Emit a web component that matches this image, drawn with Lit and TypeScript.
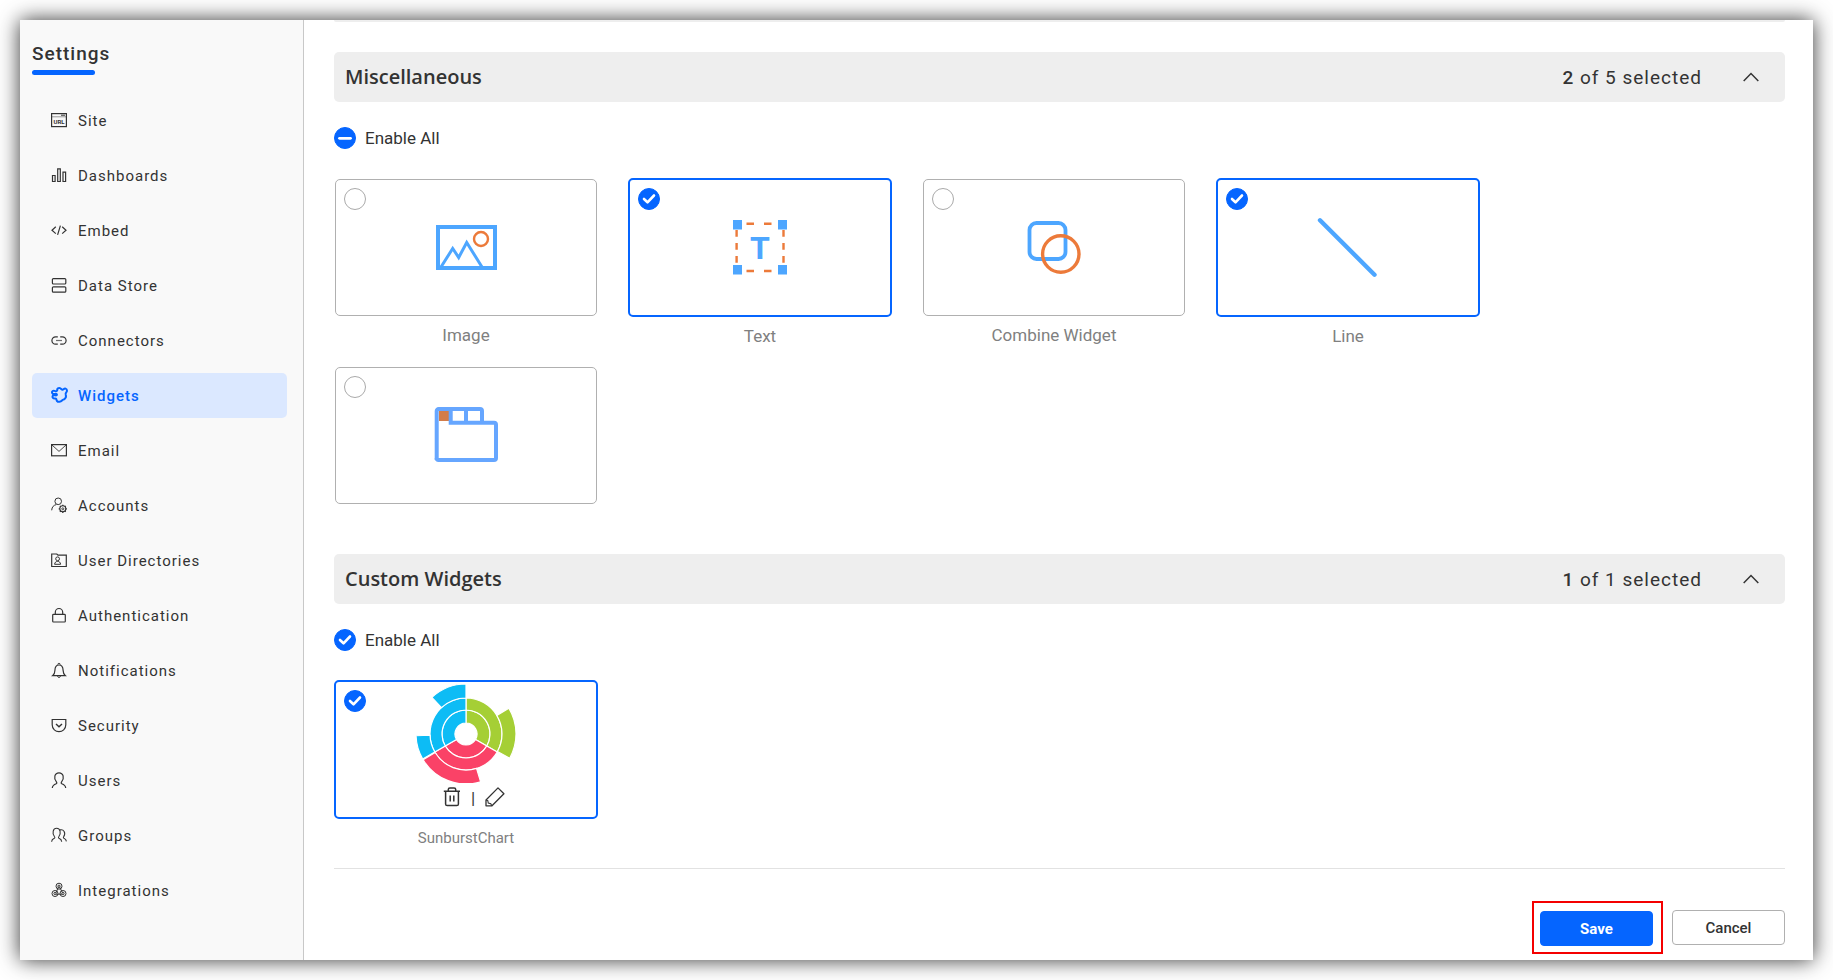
import { LitElement, html, svg, css, nothing } from "lit";
import type { SVGTemplateResult } from "lit";
import { customElement, property, state } from "lit/decorators.js";
import { classMap } from "lit/directives/class-map.js";

interface NavItem {
  name: string;
  icon: SVGTemplateResult;
}

interface Widget {
  id: string;
  name: string;
  selected: boolean;
  art: SVGTemplateResult;
  custom?: boolean;
}

/* Annular sector around (cx, cy); angles are degrees clockwise from the top. */
function sector(cx: number, cy: number, inner: number, outer: number, from: number, to: number): string {
  const at = (r: number, deg: number) => {
    const a = ((deg - 90) * Math.PI) / 180;
    return `${(cx + r * Math.cos(a)).toFixed(2)} ${(cy + r * Math.sin(a)).toFixed(2)}`;
  };
  return `M${at(outer, from)}A${outer} ${outer} 0 0 1 ${at(outer, to)}L${at(inner, to)}A${inner} ${inner} 0 0 0 ${at(inner, from)}Z`;
}

const NAV: NavItem[] = [
  {
    name: "Site",
    icon: svg`<rect x="0.6" y="1.6" width="14.8" height="13" /><path d="M1 4.8H15" stroke-width="0.8" opacity="0.6" /><path d="M10 3.2h4" stroke-width="1" /><text x="8" y="12" class="tiny">URL</text>`,
  },
  {
    name: "Dashboards",
    icon: svg`<path d="M1.5 8.5h2.6v6H1.5zM6.7 1.8h2.6v12.7H6.7zM12 5.2h2.6v9.3H12z" />`,
  },
  {
    name: "Embed",
    icon: svg`<path d="M4.8 4.8L1 8.2l3.8 3.4M11.2 4.8L15 8.2l-3.8 3.4M9.4 3.6L6.6 12.8" />`,
  },
  {
    name: "Data Store",
    icon: svg`<rect x="1.4" y="1.6" width="13.4" height="5.4" rx="1" /><rect x="1.4" y="9.8" width="13.4" height="5.4" rx="1" />`,
  },
  {
    name: "Connectors",
    icon: svg`<path d="M6.8 4.8H4.6a3.7 3.7 0 0 0 0 7.4h2.2M9.2 4.8h2.2a3.7 3.7 0 0 1 0 7.4H9.2" /><path d="M5 8.5h6" opacity="0.7" />`,
  },
  {
    name: "Widgets",
    icon: svg`<path d="M6.2 3.4C5.8 1.6 7.6.6 9 1.2c1.2.5 1.5 1.7 2.6 1.6.9-.1 1.4-1.6 3-1.2 1.7.5 1.7 2.7.7 3.7-.8.8-.9 1.5-.5 2.8.6 1.700 0 2.800-1.200 3.800-1 .8-1.800.8-2.600 1.600C9.600 15 7.200 15.400 6 14c-.9-1-.2-1.700-1.100-2.300-.8-.5-1.900.4-3-.8-.9-1 -.3-2.300.7-2.600 1.200-.4 2.200.6 3 0C6.400 7.600 5.500 6.600 4.300 6.900 2.800 7.300 1.200 7 1 5.600.8 4.200 2.200 3.400 3.400 3.900c1 .4 2.400.6 2.800-.5Z" stroke-width="2" />`,
  },
  {
    name: "Email",
    icon: svg`<rect x="0.6" y="2.6" width="14.8" height="11.2" /><path d="M1 3l7 6.400L15 3" stroke-width="0.9" />`,
  },
  {
    name: "Accounts",
    icon: svg`<circle cx="7.200" cy="4.300" r="3.300" stroke-width="1" /><path d="M.7 13.300C.9 9.800 2.700 8.200 5.300 7.600" stroke-width="1" /><circle cx="11.800" cy="11.800" r="3" stroke-width="1.100" /><circle cx="11.800" cy="11.800" r="1" stroke-width="0.900" /><path d="M11.800 7.700v1.200M11.800 14.700v1.200M7.700 11.800h1.200M14.700 11.800h1.200M8.900 8.900l.8.8M13.900 13.900l.8.8M14.700 8.900l-.8.8M9.700 13.900l-.8.8" stroke-width="1.300" />`,
  },
  {
    name: "User Directories",
    icon: svg`<path d="M.7 14.500V2h5.100l1.200 1.200h8.300v11.300z" /><circle cx="6.600" cy="6.800" r="1.900" stroke-width="1" /><path d="M3.600 12.300c.2-2 1.400-2.900 3-2.900s2.800.9 3 2.900z" stroke-width="1" />`,
  },
  {
    name: "Authentication",
    icon: svg`<rect x="1.700" y="7.400" width="12.600" height="7.600" rx="0.800" /><path d="M4.300 7.200V5.200a3.700 3.700 0 0 1 7.400 0v2" />`,
  },
  {
    name: "Notifications",
    icon: svg`<path d="M1.800 13.600h12.400c-1.700-1.300-2-3-2.100-5.200C12 5 10.500 3 8 3S4 5 3.900 8.400c-.1 2.200-.4 3.900-2.100 5.200z" /><path d="M6.800 2.600c0-1.800 2.400-1.800 2.400 0M6.500 14.200c.3 1.600 2.700 1.600 3 0" stroke-width="1" />`,
  },
  {
    name: "Security",
    icon: svg`<path d="M1.200 2.500h13.600v5.300c0 9-13.600 9-13.600 0z" /><path d="M5 7l3 2.800L11 7" stroke-width="1.400" />`,
  },
  {
    name: "Users",
    icon: svg`<path d="M1.300 16c.2-3 2-3.600 4-4.300.7-.3.600-1.200.1-1.900C2.300 6.200 3.600.8 8 .8s5.700 5.400 2.600 9c-.5.700-.6 1.600.1 1.900 2 .7 3.800 1.300 4 4.300" />`,
  },
  {
    name: "Groups",
    icon: svg`<path d="M.6 14.800c.1-2.400 1.200-3 2.700-3.600.7-.3.600-1.100.1-1.700C.900 6.300 2 1.300 5.600 1.300S10.400 6.300 7.900 9.500c-.5.600-.6 1.400.1 1.700 1.500.6 2.600 1.200 2.700 3.600M9 2.900c3.600-.9 6.200 2.700 3.700 6.700-.4.600-.4 1.300.2 1.600 1.300.5 2.300 1.100 2.500 3.200" stroke-width="1.100" />`,
  },
  {
    name: "Integrations",
    icon: svg`<g stroke-width="1"><circle cx="8" cy="4.200" r="3" /><circle cx="8" cy="4.200" r="1.100" /><circle cx="4" cy="11.500" r="3" /><circle cx="4" cy="11.500" r="1.100" /><circle cx="12" cy="11.500" r="3" /><circle cx="12" cy="11.500" r="1.100" /><path d="M7.400 5L5 10.800M8.600 5l2.800 5.600M5 12.200h6" /></g>`,
  },
];

const imageArt = svg`
  <g fill="none">
    <rect x="4" y="12" width="57" height="41" stroke="#4da6ff" stroke-width="4" />
    <path d="M7 52L18.700 33.500L24.700 42.500L32.700 27.500L48 52" stroke="#4da6ff" stroke-width="3" />
    <circle cx="47" cy="24" r="7" stroke="#ec7a3a" stroke-width="2.400" />
  </g>`;

const textArt = svg`
  <path d="M18.500 8.700h7.500M36 8.700h7.500M18.500 56h7.500M36 56h7.500M8.600 15v6.700M8.600 28v6.700M8.600 41v6.700M55.500 15v6.700M55.500 28v6.700M55.500 41v6.700" stroke="#ec7a3a" stroke-width="2.400" />
  <path d="M5 5h9v9.500H5zM50 5h9v9.500h-9zM5 50h9v9.500H5zM50 50h9v9.500h-9z" fill="#4da6ff" />
  <text x="32" y="44" text-anchor="middle" font-family="Roboto, sans-serif" font-weight="700" font-size="32" fill="#4da6ff">T</text>`;

const combineArt = svg`
  <g fill="none">
    <rect x="7.500" y="8" width="36" height="36" rx="7" stroke="#4da6ff" stroke-width="3.800" />
    <circle cx="38.800" cy="39" r="18.200" stroke="#ec7a3a" stroke-width="3.400" />
  </g>`;

const lineArt = svg`<path d="M4 5.300L58.500 59.700" stroke="#4da6ff" stroke-width="4.400" stroke-linecap="round" />`;

const tabArt = svg`
  <rect x="5" y="7.500" width="10.500" height="10.500" fill="#d27c4a" />
  <g fill="none" stroke="#66a6ff" stroke-width="4">
    <path d="M2.700 57V8a2 2 0 0 1 2-2H46a2 2 0 0 1 2 2V19" />
    <path d="M16.700 6V19.700H60a2 2 0 0 1 2 2V55a2 2 0 0 1-2 2H4.700a2 2 0 0 1-2-2" />
    <path d="M32 6V19.700" />
  </g>`;

const RINGS: Array<[string, number, number, number, number]> = [
  ["#a5cf35", 11, 24, 0, 120],
  ["#a5cf35", 24, 36, 0, 120],
  ["#a5cf35", 36, 50, 59, 119],
  ["#fa4267", 11, 24, 120, 240],
  ["#fa4267", 24, 36, 120, 240],
  ["#fa4267", 36, 50, 163, 239],
  ["#0dbcf5", 11, 24, 240, 360],
  ["#0dbcf5", 24, 36, 240, 360],
  ["#0dbcf5", 36, 50, 240, 268],
  ["#0dbcf5", 36, 50, 317, 360],
];

const sunburstArt = svg`${RINGS.map(
  ([color, inner, outer, from, to]) =>
    svg`<path d=${sector(50, 50, inner, outer, from, to)} fill=${color} stroke="#fff" stroke-width="1.200" />`
)}`;

@customElement("settings-nav")
class SettingsNav extends LitElement {
  static styles = css`
    :host {
      display: block;
      flex: 0 0 284px;
      box-sizing: border-box;
      padding: 20px 16px 20px 12px;
      background: #f9f9f9;
      border-right: 1px solid #c8c8c8;
      color: #333;
      font-family: Roboto, sans-serif;
    }
    .title {
      margin: 0;
      font-size: 19px;
      line-height: 28px;
      font-weight: 500;
      letter-spacing: 1px;
    }
    .title::after {
      content: "";
      display: block;
      width: 63px;
      height: 5px;
      margin-top: 2px;
      border-radius: 3px;
      background: #0565ff;
    }
    .list {
      display: flex;
      flex-direction: column;
      gap: 10px;
      margin: 23px 0 0;
      padding: 0;
      list-style: none;
    }
    .link {
      display: flex;
      align-items: center;
      gap: 11px;
      height: 45px;
      padding-left: 19px;
      border-radius: 5px;
      color: inherit;
      font-size: 15px;
      letter-spacing: 1px;
      text-decoration: none;
    }
    .link.active {
      background: #dbe8ff;
      color: #0565ff;
      font-weight: 500;
    }
    .icon {
      width: 16px;
      height: 17px;
      overflow: visible;
      fill: none;
      stroke: currentColor;
      stroke-width: 1.2;
    }
    .tiny {
      fill: currentColor;
      stroke: none;
      font-size: 6px;
      font-weight: 700;
      letter-spacing: 0;
      text-anchor: middle;
    }
  `;

  @property() active = "Widgets";

  render() {
    return html`
      <h1 class="title">Settings</h1>
      <ul class="list">
        ${NAV.map(
          (item) => html`<li>
            <a
              class=${classMap({ link: true, active: item.name === this.active })}
              href="#"
              aria-current=${item.name === this.active ? "page" : nothing}
              ><svg class="icon" viewBox="0 0 16 17" aria-hidden="true">${item.icon}</svg>${item.name}</a
            >
          </li>`
        )}
      </ul>
    `;
  }
}

@customElement("widget-section")
class WidgetSection extends LitElement {
  static styles = css`
    :host {
      display: block;
      color: #333;
      font-family: Roboto, sans-serif;
    }
    .bar {
      display: flex;
      align-items: center;
      height: 50px;
      padding: 0 24px 0 11px;
      border-radius: 5px;
      background: #eee;
    }
    .heading {
      flex: 1;
      margin: 0;
      font: 600 20px/28px "Open Sans", "Noto Sans", sans-serif;
    }
    .count {
      font-size: 19px;
      letter-spacing: 1px;
    }
    .count b {
      font-weight: 500;
    }
    .toggle {
      display: flex;
      margin-left: 39px;
      padding: 0;
      border: 0;
      background: none;
      color: inherit;
      cursor: pointer;
    }
    .all {
      display: flex;
      align-items: center;
      gap: 9px;
      height: 22px;
      margin: 25px 0 29px;
      font-size: 17px;
    }
    .tick {
      appearance: none;
      flex: none;
      box-sizing: border-box;
      width: 22px;
      height: 22px;
      margin: 0;
      border: 1px solid #aaa;
      border-radius: 50%;
      background: #fff center / 22px 22px no-repeat;
      cursor: pointer;
    }
    .tick:checked,
    .tick:indeterminate {
      border-color: #0565ff;
      background-color: #0565ff;
    }
    .tick:checked {
      background-image: url("data:image/svg+xml,%3Csvg xmlns='http://www.w3.org/2000/svg' viewBox='0 0 22 22'%3E%3Cpath d='M6 11l3.500 3.300L16 7.500' fill='none' stroke='%23fff' stroke-width='2.600' stroke-linecap='round' stroke-linejoin='round'/%3E%3C/svg%3E");
    }
    .tick:indeterminate {
      background-image: url("data:image/svg+xml,%3Csvg xmlns='http://www.w3.org/2000/svg' viewBox='0 0 22 22'%3E%3Cpath d='M5.500 11.300h11' stroke='%23fff' stroke-width='2.800' stroke-linecap='round'/%3E%3C/svg%3E");
    }
    .grid {
      display: grid;
      grid-template-columns: repeat(4, minmax(0, 264px));
      grid-auto-rows: 188px;
      column-gap: 30px;
    }
    .card {
      position: relative;
      display: flex;
      flex-direction: column;
      align-items: center;
      justify-content: center;
      box-sizing: border-box;
      height: 137px;
      margin: 1px;
      border: 1px solid #b0b0b0;
      border-radius: 5px;
      background: #fff;
    }
    .card.selected {
      height: 139px;
      margin: 0;
      border: 2px solid #0565ff;
    }
    .card .tick {
      position: absolute;
      top: 8px;
      left: 8px;
    }
    .art {
      width: 64px;
      height: 65px;
    }
    .card.custom {
      justify-content: flex-start;
      padding-top: 2px;
    }
    .card.custom .art {
      width: 100px;
      height: 99px;
    }
    .actions {
      display: flex;
      align-items: flex-start;
      gap: 10px;
      padding: 4px 0 0 16px;
      font-size: 17px;
      line-height: 23px;
    }
    .action {
      padding: 0;
      border: 0;
      background: none;
      color: inherit;
      line-height: 0;
      cursor: pointer;
    }
    .caption {
      display: block;
      margin-top: 7px;
      color: #808080;
      font-size: 17px;
      line-height: 24px;
      text-align: center;
    }
    .caption.custom {
      font-size: 15px;
    }
  `;

  @property() heading = "";
  @property({ attribute: false }) widgets: Widget[] = [];
  @state() private open = true;

  private toggleAll(on: boolean) {
    this.widgets = this.widgets.map((w) => ({ ...w, selected: on }));
  }

  private toggleOne(id: string) {
    this.widgets = this.widgets.map((w) => (w.id === id ? { ...w, selected: !w.selected } : w));
  }

  private renderActions() {
    return html`<div class="actions">
      <button class="action" type="button" aria-label="Delete">
        <svg width="18" height="20" viewBox="0 0 18 20" fill="none" stroke="currentColor" stroke-width="1.500">
          <path d="M.8 4.300H17M2.600 4.300V17a1.600 1.600 0 0 0 1.600 1.600h9.600a1.600 1.600 0 0 0 1.600-1.600V4.300M5.300 4v-1.400A1.600 1.600 0 0 1 6.900 1h4.200a1.600 1.600 0 0 1 1.600 1.600V4" />
          <path d="M7.200 8.600v6M10.800 8.600v6" />
        </svg>
      </button>
      <span aria-hidden="true">|</span>
      <button class="action" type="button" aria-label="Edit">
        <svg width="20" height="20" viewBox="0 0 20 20" fill="none" stroke="currentColor" stroke-width="1.300">
          <path d="M1 18.800V13L13 .9 18.900 6.800 7 18.800z" stroke-linejoin="round" />
          <path d="M1.200 13.200l1.600.4.500 2.500 2.500.6 1 2" stroke-width="1.100" />
        </svg>
      </button>
    </div>`;
  }

  private renderWidget(w: Widget) {
    return html`<div>
      <div class=${classMap({ card: true, selected: w.selected, custom: !!w.custom })}>
        <input
          class="tick"
          type="checkbox"
          id=${w.id}
          aria-label=${w.name ? nothing : "Tab"}
          .checked=${w.selected}
          @change=${() => this.toggleOne(w.id)}
        />
        <svg class="art" viewBox=${w.custom ? "0 0 100 99" : "0 0 64 65"} aria-hidden="true">${w.art}</svg>
        ${w.custom ? this.renderActions() : nothing}
      </div>
      ${w.name
        ? html`<label class=${classMap({ caption: true, custom: !!w.custom })} for=${w.id}>${w.name}</label>`
        : nothing}
    </div>`;
  }

  render() {
    const chosen = this.widgets.filter((w) => w.selected).length;
    const total = this.widgets.length;
    return html`
      <div class="bar">
        <h2 class="heading">${this.heading}</h2>
        <span class="count"><b>${chosen}</b> of ${total} selected</span>
        <button
          class="toggle"
          type="button"
          aria-label="Toggle section"
          aria-expanded=${this.open ? "true" : "false"}
          @click=${() => (this.open = !this.open)}
        >
          <svg width="20" height="20" viewBox="0 0 20 20" fill="none" stroke="currentColor" stroke-width="1.500">
            <path d=${this.open ? "M2.700 14L10 6.500L17.300 14" : "M2.700 6.500L10 14L17.300 6.500"} />
          </svg>
        </button>
      </div>
      ${this.open
        ? html`<div class="all">
              <input
                class="tick"
                type="checkbox"
                id="all"
                .checked=${total > 0 && chosen === total}
                .indeterminate=${chosen > 0 && chosen < total}
                @change=${(e: Event) => this.toggleAll((e.target as HTMLInputElement).checked)}
              />
              <label for="all">Enable All</label>
            </div>
            <div class="grid">${this.widgets.map((w) => this.renderWidget(w))}</div>`
        : nothing}
    `;
  }
}

@customElement("app-root")
class AppRoot extends LitElement {
  static styles = css`
    :host {
      display: flex;
      box-sizing: border-box;
      min-height: 100vh;
      padding: 20px;
      background: #fff;
      color: #333;
      font-family: Roboto, sans-serif;
    }
    .frame {
      display: flex;
      flex: 1;
      min-width: 0;
      background: #fff;
      box-shadow: 0 0 20px rgba(0, 0, 0, 0.8);
    }
    .main {
      flex: 1;
      min-width: 0;
      padding: 0 28px 6px 30px;
    }
    .previous {
      height: 2px;
      margin-bottom: 30px;
      border-radius: 0 0 5px 5px;
      background: #eee;
    }
    .footer {
      display: flex;
      align-items: center;
      justify-content: flex-end;
      gap: 9px;
      padding-top: 32px;
      border-top: 1px solid #e2e2e2;
    }
    .highlight {
      padding: 8px 8px 6px 6px;
      border: 2px solid #f40000;
    }
    .button {
      display: block;
      box-sizing: border-box;
      width: 113px;
      height: 35px;
      padding: 0;
      border: 1px solid #b0b0b0;
      border-radius: 4px;
      background: #fff;
      color: #333;
      font: 500 15px/20px Roboto, sans-serif;
      cursor: pointer;
    }
    .button.primary {
      border-color: #0565ff;
      background: #0565ff;
      color: #fff;
      font-weight: 700;
    }
  `;

  private misc: Widget[] = [
    { id: "image", name: "Image", selected: false, art: imageArt },
    { id: "text", name: "Text", selected: true, art: textArt },
    { id: "combine", name: "Combine Widget", selected: false, art: combineArt },
    { id: "line", name: "Line", selected: true, art: lineArt },
    { id: "tab", name: "", selected: false, art: tabArt },
  ];

  private custom: Widget[] = [
    { id: "sunburst", name: "SunburstChart", selected: true, art: sunburstArt, custom: true },
  ];

  render() {
    return html`
      <div class="frame">
        <settings-nav active="Widgets"></settings-nav>
        <main class="main">
          <div class="previous"></div>
          <widget-section heading="Miscellaneous" .widgets=${this.misc}></widget-section>
          <widget-section heading="Custom Widgets" .widgets=${this.custom}></widget-section>
          <div class="footer">
            <div class="highlight"><button class="button primary" type="button">Save</button></div>
            <button class="button" type="button">Cancel</button>
          </div>
        </main>
      </div>
    `;
  }
}
